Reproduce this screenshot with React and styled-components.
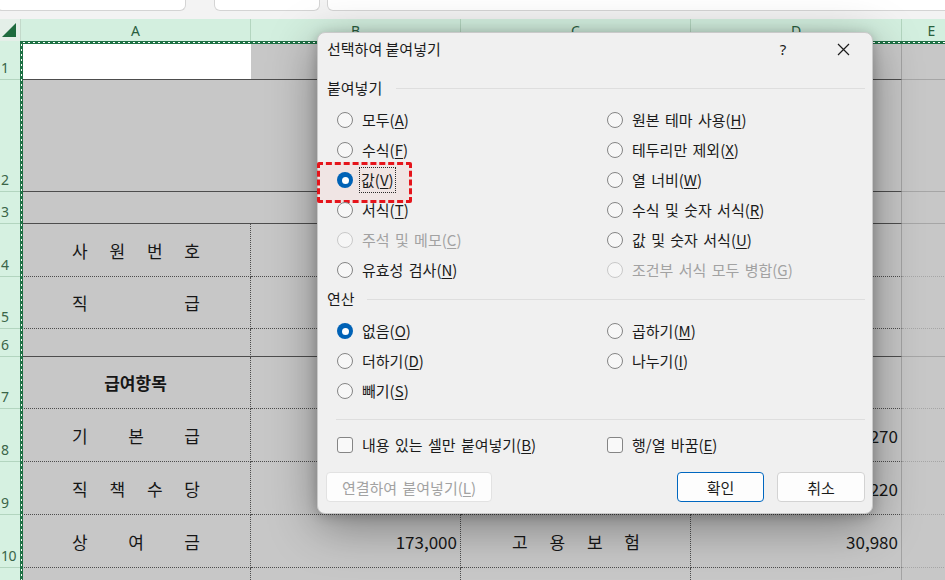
import React from 'react';
import styled, { createGlobalStyle, css } from 'styled-components';

const KR = `"Noto Sans CJK KR", "Noto Sans", sans-serif`;

const GlobalStyle = createGlobalStyle`
  html, body { margin: 0; padding: 0; background: #f3f3f3; }
  body { font-family: ${KR}; }
  * { box-sizing: border-box; }
`;

const Page = styled.div`
  position: relative;
  width: 945px;
  height: 580px;
  overflow: hidden;
  background: #f3f3f3;
`;

/* ---------- top formula bar ---------- */
const TopBar = styled.div`
  height: 19px;
  display: flex;
  align-items: flex-start;
`;
const BarBox = styled.div`
  height: 11px;
  margin-left: ${(p) => p.$ml}px;
  margin-right: ${(p) => p.$mr || 0}px;
  width: ${(p) => (p.$w ? `${p.$w}px` : 'auto')};
  flex: ${(p) => (p.$w ? 'none' : 1)};
  background: #fff;
  border: 1px solid #d4d4d4;
  border-top: none;
  border-radius: 0 0 6px 6px;
`;

/* ---------- sheet ---------- */
const Sheet = styled.div`
  display: grid;
  grid-template-columns: 21px 230px 210px 230px 211px 60px;
  grid-template-rows: 22px 39px 112px 32px 53px 52px 28px 52px 53px 53px 53px 40px;
`;

const Corner = styled.div`
  background: #e4efe8;
  border-right: 1px solid #c3d9ca;
  display: flex;
  justify-content: flex-end;
  align-items: flex-end;
  padding: 0 4px 4px 0;
`;
const Triangle = styled.div`
  width: 0;
  height: 0;
  border-left: 14px solid transparent;
  border-bottom: 14px solid #1e6b3e;
`;

const ColHeader = styled.div`
  background: #d3efdf;
  border-right: 1px solid #b3d5bf;
  color: #2a5f3f;
  font-family: "Noto Sans", sans-serif;
  font-size: 14px;
  display: flex;
  align-items: center;
  justify-content: center;
`;

const RowHeader = styled.div`
  background: #d6f1e1;
  border-bottom: 1px solid #b3d5bf;
  color: #3a6548;
  font-family: "Noto Sans", sans-serif;
  font-size: 14px;
  line-height: 16px;
  display: flex;
  align-items: flex-end;
  padding: 0 0 3px 1px;
  letter-spacing: -0.5px;
`;

const Cell = styled.div`
  grid-column: span ${(p) => p.$span || 1};
  background: ${(p) => (p.$white ? '#ffffff' : '#c7c7c7')};
  border-bottom: 1px ${(p) => p.$bottom || 'dotted'} ${(p) => (p.$light ? '#a6a6a6' : '#4d4d4d')};
  border-right: ${(p) =>
    p.$right === 'none'
      ? 'none'
      : p.$right === 'grid'
      ? '1px solid #a3a3a3'
      : '1px dotted #4d4d4d'};
  display: flex;
  align-items: center;
  font-family: ${KR};
  font-size: 17px;
  color: #161616;
  ${(p) =>
    p.$spread &&
    css`
      justify-content: space-between;
      padding: 0 50px 0 51px;
    `}
  ${(p) =>
    p.$num &&
    css`
      justify-content: flex-end;
      padding-right: 3px;
    `}
  ${(p) =>
    p.$center &&
    css`
      justify-content: center;
      font-weight: 700;
    `}
`;

const Selection = styled.div`
  position: absolute;
  left: 20px;
  top: 41px;
  width: 1000px;
  height: 700px;
  border-top: 3px solid #1e7145;
  border-left: 3px solid #1e7145;
  pointer-events: none;
  &::before {
    content: '';
    position: absolute;
    top: -2px;
    left: 0;
    right: 0;
    height: 1px;
    background: repeating-linear-gradient(90deg, #ffffff 0 2px, transparent 2px 5px);
  }
  &::after {
    content: '';
    position: absolute;
    left: -2px;
    top: 0;
    bottom: 0;
    width: 1px;
    background: repeating-linear-gradient(180deg, #ffffff 0 2px, transparent 2px 5px);
  }
`;

/* ---------- dialog ---------- */
const Dialog = styled.div`
  position: absolute;
  left: 317px;
  top: 32px;
  width: 556px;
  height: 482px;
  background: #f0f0f0;
  border: 1px solid #c9c9c9;
  border-radius: 8px;
  box-shadow: 0 12px 48px rgba(0, 0, 0, 0.38), 0 2px 12px rgba(0, 0, 0, 0.2);
  display: flex;
  flex-direction: column;
  font-family: ${KR};
  color: #1b1b1b;
`;

const TitleBar = styled.div`
  height: 33px;
  display: flex;
  align-items: center;
  padding: 0 6px 0 9px;
  font-size: 15px;
`;
const TitleText = styled.div`
  flex: 1;
  line-height: 20px;
`;
const TitleButton = styled.div`
  width: 46px;
  height: 28px;
  display: flex;
  align-items: center;
  justify-content: center;
  font-size: 15px;
  margin-left: ${(p) => p.$ml || 0}px;
  font-family: "Noto Sans", sans-serif;
`;

const Body = styled.div`
  flex: 1;
  display: flex;
  flex-direction: column;
  padding: 0 7px 11px 9px;
`;

const SectionHead = styled.div`
  display: flex;
  align-items: center;
  height: 20px;
  margin-top: ${(p) => p.$mt}px;
  font-size: 15px;
  line-height: 20px;
`;
const Rule = styled.div`
  flex: 1;
  height: 1px;
  background: #dedede;
  margin-left: ${(p) => p.$ml}px;
`;

const OptionGrid = styled.div`
  display: grid;
  grid-template-columns: 270px 1fr;
  grid-auto-rows: ${(p) => p.$row || 30}px;
  padding-left: 10px;
  margin-top: ${(p) => p.$mt}px;
`;

const Option = styled.div`
  position: relative;
  display: flex;
  align-items: center;
  gap: 9px;
  font-size: 15px;
  line-height: 20px;
  word-spacing: 2px;
  color: ${(p) => (p.$disabled ? '#a2a2a2' : '#1b1b1b')};
`;

const Radio = styled.span`
  width: 16px;
  height: 16px;
  flex: none;
  border-radius: 50%;
  position: relative;
  z-index: 1;
  ${(p) =>
    p.$checked
      ? css`
          background: #0062b6;
          display: flex;
          align-items: center;
          justify-content: center;
          &::after {
            content: '';
            width: 7px;
            height: 7px;
            border-radius: 50%;
            background: #ffffff;
          }
        `
      : css`
          border: 1px solid ${p.$disabled ? '#c9c9c9' : '#858585'};
          background: ${p.$disabled ? '#f6f6f6' : '#f7f7f7'};
        `}
`;

const Check = styled.span`
  width: 16px;
  height: 16px;
  flex: none;
  border: 1px solid #858585;
  border-radius: 3px;
  background: #f9f9f9;
`;

const Label = styled.span`
  position: relative;
  z-index: 1;
  ${(p) =>
    p.$focus &&
    css`
      border: 1px dotted #2a2a2a;
      padding: 2px 1px;
      margin-left: -3px;
    `}
`;

const Highlight = styled.div`
  position: absolute;
  left: -20px;
  top: -3px;
  width: 95px;
  height: 41px;
  border: 3px dashed #e5141b;
  background: rgba(235, 80, 70, 0.07);
  border-radius: 2px;
`;

const Separator = styled.div`
  height: 1px;
  background: #dedede;
  margin: ${(p) => p.$mt}px 0 0 9px;
`;

const ButtonRow = styled.div`
  display: flex;
  align-items: center;
  gap: 13px;
  margin-top: 17px;
  margin-left: -1px;
`;

const Button = styled.div`
  height: 30px;
  width: ${(p) => p.$w}px;
  display: flex;
  align-items: center;
  justify-content: center;
  font-size: 15px;
  border-radius: 4px;
  background: #fdfdfd;
  border: 1px solid ${(p) => (p.$primary ? '#0067c0' : p.$disabled ? '#e2e2e2' : '#d3d3d3')};
  color: ${(p) => (p.$disabled ? '#a2a2a2' : '#1b1b1b')};
  margin-right: ${(p) => (p.$push ? 'auto' : '0')};
  word-spacing: 2px;
`;

const Key = styled.u`
  text-underline-offset: 2px;
`;

const Spread = ({ text }) =>
  text
    .replace(/\s/g, '')
    .split('')
    .map((c, i) => <span key={i}>{c}</span>);

const Opt = ({ text, k, checked, disabled, focus, highlight }) => (
  <Option $disabled={disabled}>
    {highlight && <Highlight />}
    <Radio $checked={checked} $disabled={disabled} />
    <Label $focus={focus}>
      {text}(<Key>{k}</Key>)
    </Label>
  </Option>
);

const CloseIcon = () => (
  <svg width="13" height="13" viewBox="0 0 13 13">
    <path d="M1 1 L12 12 M12 1 L1 12" stroke="#1b1b1b" strokeWidth="1.2" fill="none" />
  </svg>
);

const rowNums = ['1', '2', '3', '4', '5', '6', '7', '8', '9', '10', ''];

export default function App() {
  return (
    <Page>
      <GlobalStyle />
      <TopBar>
        <BarBox $ml={-4} $w={190} />
        <BarBox $ml={28} $w={106} />
        <BarBox $ml={7} $mr={-8} />
      </TopBar>

      <Sheet>
        <Corner>
          <Triangle />
        </Corner>
        <ColHeader>A</ColHeader>
        <ColHeader>B</ColHeader>
        <ColHeader>C</ColHeader>
        <ColHeader>D</ColHeader>
        <ColHeader>E</ColHeader>

        {/* row 1 */}
        <RowHeader>{rowNums[0]}</RowHeader>
        <Cell $white $bottom="solid" $right="none" />
        <Cell $span={3} $bottom="solid" $right="grid" />
        <Cell $bottom="solid" $light $right="none" />

        {/* row 2 */}
        <RowHeader>{rowNums[1]}</RowHeader>
        <Cell $span={4} $bottom="solid" $right="grid" />
        <Cell $bottom="solid" $light $right="none" />

        {/* row 3 */}
        <RowHeader>{rowNums[2]}</RowHeader>
        <Cell $span={4} $bottom="solid" $right="grid" />
        <Cell $bottom="solid" $light $right="none" />

        {/* row 4 */}
        <RowHeader>{rowNums[3]}</RowHeader>
        <Cell $spread>
          <Spread text="사원번호" />
        </Cell>
        <Cell />
        <Cell />
        <Cell $right="grid" />
        <Cell $light $right="none" />

        {/* row 5 */}
        <RowHeader>{rowNums[4]}</RowHeader>
        <Cell $spread>
          <Spread text="직급" />
        </Cell>
        <Cell />
        <Cell />
        <Cell $right="grid" />
        <Cell $light $right="none" />

        {/* row 6 */}
        <RowHeader>{rowNums[5]}</RowHeader>
        <Cell $bottom="solid" />
        <Cell $bottom="solid" />
        <Cell $bottom="solid" />
        <Cell $bottom="solid" $right="grid" />
        <Cell $bottom="solid" $light $right="none" />

        {/* row 7 */}
        <RowHeader>{rowNums[6]}</RowHeader>
        <Cell $center>급여항목</Cell>
        <Cell />
        <Cell />
        <Cell $right="grid" />
        <Cell $light $right="none" />

        {/* row 8 */}
        <RowHeader>{rowNums[7]}</RowHeader>
        <Cell $spread>
          <Spread text="기본급" />
        </Cell>
        <Cell />
        <Cell />
        <Cell $num $right="grid">
          14,270
        </Cell>
        <Cell $light $right="none" />

        {/* row 9 */}
        <RowHeader>{rowNums[8]}</RowHeader>
        <Cell $spread>
          <Spread text="직책수당" />
        </Cell>
        <Cell />
        <Cell />
        <Cell $num $right="grid">
          19,220
        </Cell>
        <Cell $light $right="none" />

        {/* row 10 */}
        <RowHeader>{rowNums[9]}</RowHeader>
        <Cell $spread>
          <Spread text="상여금" />
        </Cell>
        <Cell $num>173,000</Cell>
        <Cell $spread>
          <Spread text="고용보험" />
        </Cell>
        <Cell $num $right="grid">
          30,980
        </Cell>
        <Cell $light $right="none" />

        {/* row 11 */}
        <RowHeader>{rowNums[10]}</RowHeader>
        <Cell />
        <Cell />
        <Cell />
        <Cell $right="grid" />
        <Cell $light $right="none" />
      </Sheet>

      <Selection />

      <Dialog>
        <TitleBar>
          <TitleText>선택하여 붙여넣기</TitleText>
          <TitleButton>?</TitleButton>
          <TitleButton $ml={14}>
            <CloseIcon />
          </TitleButton>
        </TitleBar>

        <Body>
          <SectionHead $mt={13}>
            붙여넣기
            <Rule $ml={14} />
          </SectionHead>
          <OptionGrid $mt={7}>
            <Opt text="모두" k="A" />
            <Opt text="원본 테마 사용" k="H" />
            <Opt text="수식" k="F" />
            <Opt text="테두리만 제외" k="X" />
            <Opt text="값" k="V" checked focus highlight />
            <Opt text="열 너비" k="W" />
            <Opt text="서식" k="T" />
            <Opt text="수식 및 숫자 서식" k="R" />
            <Opt text="주석 및 메모" k="C" disabled />
            <Opt text="값 및 숫자 서식" k="U" />
            <Opt text="유효성 검사" k="N" />
            <Opt text="조건부 서식 모두 병합" k="G" disabled />
          </OptionGrid>

          <SectionHead $mt={4}>
            연산
            <Rule $ml={12} />
          </SectionHead>
          <OptionGrid $mt={7}>
            <Opt text="없음" k="O" checked />
            <Opt text="곱하기" k="M" />
            <Opt text="더하기" k="D" />
            <Opt text="나누기" k="I" />
            <Opt text="빼기" k="S" />
          </OptionGrid>

          <Separator $mt={13} />

          <OptionGrid $mt={15} $row={20}>
            <Option>
              <Check />
              <Label>
                내용 있는 셀만 붙여넣기(<Key>B</Key>)
              </Label>
            </Option>
            <Option>
              <Check />
              <Label>
                행/열 바꿈(<Key>E</Key>)
              </Label>
            </Option>
          </OptionGrid>

          <ButtonRow>
            <Button $w={166} $disabled $push>
              <span>
                연결하여 붙여넣기(<Key>L</Key>)
              </span>
            </Button>
            <Button $w={87} $primary>
              확인
            </Button>
            <Button $w={88}>취소</Button>
          </ButtonRow>
        </Body>
      </Dialog>
    </Page>
  );
}
